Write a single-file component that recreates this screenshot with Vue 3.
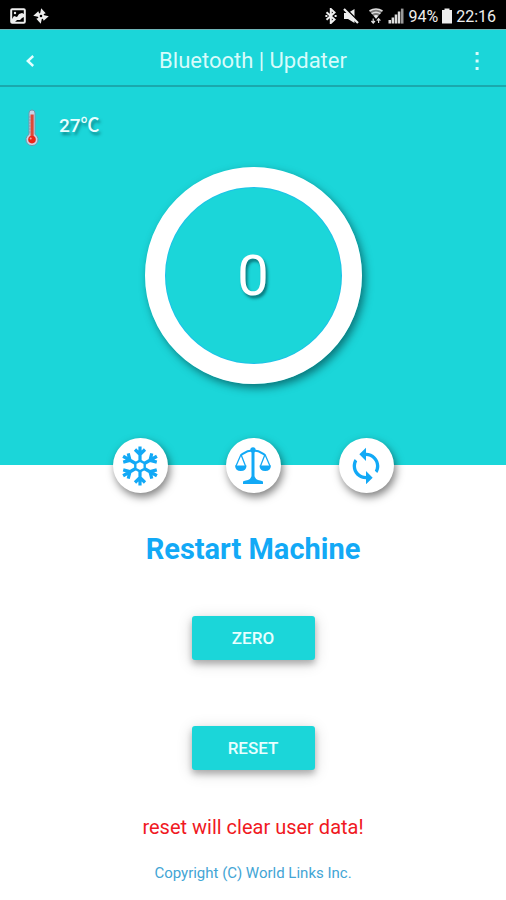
<script setup>
import { ref } from 'vue'

const temperature = ref('27℃')
const reading = ref(0)
const arms = [0, 60, 120, 180, 240, 300]
</script>

<template>
  <div class="screen">
    <div class="status">
      <div class="group">
        <svg class="icon photo" viewBox="0 0 16 16" aria-hidden="true">
          <rect x="1.2" y="1.2" width="13.6" height="13.6" rx="1" fill="none" stroke="#eee" stroke-width="2" />
          <path d="M2 11l2-3 3 1 2-3 3-1 2 1v3l-2 1-2 2-3 0-2 2H2z" fill="#eee" />
          <circle cx="5" cy="5" r="1.2" fill="#eee" />
        </svg>
        <svg class="icon" viewBox="0 0 16 16" aria-hidden="true">
          <g fill="#eee">
            <path v-for="a in [0, 90, 180, 270]" :key="a" :transform="`rotate(${a + 12} 8 8)`" d="M6.6 7.2V0.4L12 4.4 8.8 6.6z" />
          </g>
          <circle cx="8" cy="8" r="2.2" fill="#000" stroke="#eee" stroke-width="1.8" />
        </svg>
      </div>
      <div class="group right">
        <svg class="icon" viewBox="0 0 16 16" aria-hidden="true">
          <path d="M3.5 4.3l8 7.2L7.8 15V1l3.7 3.5-8 7.2" fill="none" stroke="#eee" stroke-width="2" />
          <path d="M2.4 7h2v2h-2zM11.6 7h2v2h-2z" fill="#eee" />
        </svg>
        <svg class="icon" viewBox="0 0 16 16" aria-hidden="true">
          <path d="M1 5h4L11.5 1v14L5 11H1z" fill="#eee" />
          <path d="M2.6 0.4l13 13" stroke="#000" stroke-width="1.6" />
          <path d="M1 1l14 14" stroke="#eee" stroke-width="2.2" />
        </svg>
        <svg class="icon wifi" viewBox="0 0 16 16" aria-hidden="true">
          <path d="M1.5 3Q8 -1 14.5 3L8 11z" fill="#777" />
          <path d="M1.5 3Q8 -1 14.5 3M3.6 5.7Q8 2.8 12.4 5.7" fill="none" stroke="#ddd" stroke-width="1.6" />
          <path d="M5.7 7.7Q8 6.5 10.3 7.7L8 10.6z" fill="#eee" />
          <path d="M5.2 10.5v4M3.4 13l1.8 2L7 13M10.6 15v-4M8.8 12.7l1.8-2 1.8 2" fill="none" stroke="#ddd" stroke-width="1.2" />
        </svg>
        <svg class="icon" viewBox="0 0 16 16" aria-hidden="true">
          <path d="M0.5 12h2.5V15.5h-2.5zM3.6 9.6h2.5v6h-2.5zM6.7 6.6h2.5v9h-2.5zM9.8 3.6h2.5v12h-2.5z" fill="#ddd" />
          <path d="M12.9 0.6h2.6v15h-2.6z" fill="#999" />
        </svg>
        <span>94%</span>
        <svg class="battery" viewBox="0 0 10 16" aria-hidden="true">
          <path d="M2.5 0.6h5V2H10V15.6H0V2h2.5z" fill="#eee" />
        </svg>
        <span>22:16</span>
      </div>
    </div>

    <header class="bar">
      <button class="tool" type="button" aria-label="Back">
        <svg viewBox="0 0 24 24" width="24" height="24"><path d="M15.2 7l-5.4 5 5.4 5" fill="none" stroke="#e4ffff" stroke-width="2.4" /></svg>
      </button>
      <h1>Bluetooth | Updater</h1>
      <button class="tool" type="button" aria-label="More options">
        <svg viewBox="0 0 24 24" width="24" height="24" fill="#d8fbfb"><path d="M11.6 3h3v3h-3zM11.6 10.5h3v3h-3zM11.6 18h3v3h-3z" /></svg>
      </button>
    </header>

    <main>
      <section class="hero">
        <div class="temperature">
          <svg viewBox="0 0 14 38" width="14" height="38" aria-hidden="true">
            <path d="M4 4a3 3 0 0 1 6 0v21.4a6 6 0 1 1-6 0z" fill="#c9d5e6" stroke="#7297ae" stroke-width="1" />
            <path d="M5.5 5.5h3.2V30H5.5z" fill="#dd4a38" />
            <path d="M4 8h2M4 11h2M4 14h2M4 17h2M4 20h2M4 23h2" stroke="#98939e" stroke-width="1" />
            <circle cx="7" cy="30.6" r="3.8" fill="#ee2518" />
            <circle cx="5.7" cy="29.4" r="1" fill="#f8a59c" />
          </svg>
          <span>{{ temperature }}</span>
        </div>
        <div class="dial"><output>{{ reading }}</output></div>
      </section>

      <nav class="actions">
        <button type="button" aria-label="Cool">
          <svg viewBox="-20 -20 40 40" width="40" height="40" fill="none" stroke="#12a9f6">
            <path d="M0 -5.4L4.7 -2.7V2.7L0 5.4L-4.7 2.7V-2.7Z" stroke-width="2.4" />
            <path v-for="a in arms" :key="a" :transform="`rotate(${a})`" d="M0 -5.5V-19.5M-5 -16.5L0 -11.5L5 -16.5" stroke-width="3.2" />
          </svg>
        </button>
        <button type="button" aria-label="Balance">
          <svg viewBox="-20 -20 40 40" width="40" height="40" fill="none" stroke="#12a9f6">
            <circle cx="0" cy="-16" r="2.7" fill="#12a9f6" stroke="none" />
            <path d="M0 -16V13" stroke-width="3" />
            <path d="M0 -15.5C-6 -16-8-13.5-12 -11M0 -15.5C6 -16 8-13.5 12 -11" stroke-width="2" />
            <path d="M-12 -11.5L-17 0M-12 -11.5L-7.5 0M12 -11.5L7.5 0M12 -11.5L17 0" stroke-width="1.3" />
            <path d="M-18 -0.5H-6.4Q-6.8 5-12.2 5T-18 -0.5ZM18 -0.5H6.4Q6.8 5 12.2 5T18 -0.5ZM-10 18V15.6Q-9 14.7-5 14Q-2.5 13-1.5 10.5H1.5Q2.5 13 5 14Q9 14.7 10 15.6V18Z" fill="#12a9f6" stroke="none" />
          </svg>
        </button>
        <button type="button" aria-label="Sync">
          <svg viewBox="0 0 24 24" width="40" height="40" fill="#12a9f6">
            <path d="M12 4V1L8 5l4 4V6c3.31 0 6 2.69 6 6 0 1.01-.25 1.97-.7 2.8l1.46 1.46C19.54 15.03 20 13.57 20 12c0-4.42-3.58-8-8-8zm0 14c-3.31 0-6-2.69-6-6 0-1.01.25-1.97.7-2.8L5.24 7.74C4.46 8.97 4 10.43 4 12c0 4.42 3.58 8 8 8v3l4-4-4-4v3z" />
          </svg>
        </button>
      </nav>

      <section class="restart">
        <h2>Restart Machine</h2>
        <button type="button">ZERO</button>
        <button type="button">RESET</button>
        <p class="warning">reset will clear user data!</p>
      </section>
    </main>
    <footer>Copyright (C) World Links Inc.</footer>
  </div>
</template>

<style>
body {
  margin: 0;
  background: #fff;
}
</style>

<style scoped>
.screen {
  min-height: 100vh;
  font-family: Roboto, "Noto Sans CJK SC", sans-serif;
}
button {
  border: 0;
  padding: 0;
  font-family: inherit;
  cursor: pointer;
}
.status {
  display: flex;
  justify-content: space-between;
  align-items: center;
  height: 29px;
  padding: 3px 10px 0;
  box-sizing: border-box;
  background: #000;
  color: #eee;
  font-size: 16px;
}
.group {
  display: flex;
  align-items: center;
  gap: 7px;
}
.icon {
  width: 16px;
  height: 16px;
}
.right {
  gap: 4px;
}
.wifi {
  margin-left: 5px;
}
.battery {
  width: 10px;
  height: 16px;
}
.bar {
  display: flex;
  align-items: center;
  justify-content: space-between;
  height: 58px;
  padding: 6px 18px 0;
  box-sizing: border-box;
  background: #1bd6d9;
  border-top: 1px solid #6fb5b8;
  border-bottom: 2px solid #1aa9ad;
}
.tool {
  display: flex;
  background: none;
}
h1 {
  margin: 0;
  color: #d8fbfb;
  font-size: 22px;
  font-weight: 400;
}
.hero {
  display: flex;
  flex-direction: column;
  gap: 20px;
  padding: 22px 24px 81px;
  background: #1bd6d9;
}
.temperature {
  display: flex;
  align-items: center;
  gap: 20px;
  height: 38px;
  padding-left: 1px;
  color: #e8ffff;
  font-size: 19px;
  font-weight: 500;
  line-height: 24px;
  text-shadow: 2px 3px 3px rgba(0, 60, 65, 0.5);
}
.temperature span {
  margin-bottom: 4px;
}
.dial {
  display: grid;
  place-items: center;
  align-self: center;
  width: 217px;
  height: 217px;
  box-sizing: border-box;
  border: 20px solid #fff;
  border-radius: 50%;
  box-shadow: 3px 4px 8px rgba(0, 50, 55, 0.6), inset 0 0 0 1px #1fc0ea;
  color: #fff;
  font-size: 56px;
  text-shadow: 2px 3px 3px rgba(0, 60, 65, 0.6);
}
.actions {
  display: flex;
  justify-content: center;
  gap: 58px;
  margin-top: -27px;
}
.actions button {
  display: grid;
  place-items: center;
  width: 55px;
  height: 55px;
  border-radius: 50%;
  background: #fff;
  box-shadow: 2px 4px 8px rgba(0, 0, 0, 0.5);
}
.restart {
  display: flex;
  flex-direction: column;
  align-items: center;
}
h2 {
  margin: 38px 0 49px;
  color: #12a9f6;
  font-size: 29px;
  line-height: 36px;
  font-weight: 700;
}
.restart button {
  width: 123px;
  height: 44px;
  margin-bottom: 66px;
  border-radius: 3px;
  background: #1bd6d9;
  color: #e8ffff;
  font-size: 17px;
  font-weight: 500;
  box-shadow: 0 4px 6px rgba(0, 0, 0, 0.25), 0 3px 16px rgba(0, 0, 0, 0.16);
}
.warning {
  margin: -21px 0 0;
  color: #f01822;
  font-size: 20px;
  line-height: 24px;
}
footer {
  margin-top: 24px;
  color: #43a5d5;
  font-size: 15px;
  line-height: 20px;
  text-align: center;
}
</style>
